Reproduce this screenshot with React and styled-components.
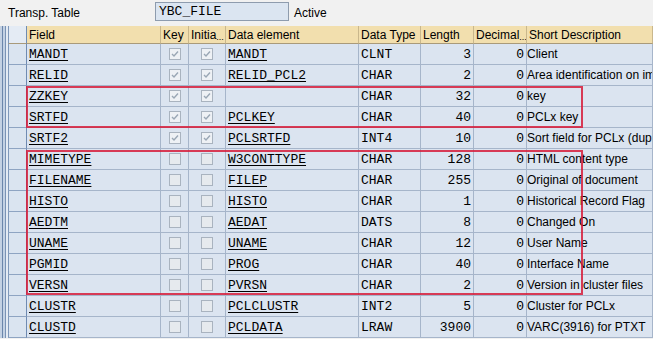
import React from 'react';
import styled, { createGlobalStyle } from 'styled-components';

const GlobalStyle = createGlobalStyle`
  html, body {
    margin: 0;
    padding: 0;
    background: #f1f1f1;
    overflow: hidden;
  }
  body {
    color: #000;
    font-family: "Liberation Sans", Arial, sans-serif;
    font-size: 12px;
  }
`;

// selector, field, key, initial, data element, type, length, decimals, description
const COLUMNS = '19px 134px 28px 37px 133px 62px 53px 53px 126px';

const FIELDS = [
  { name: 'MANDT', key: true, initial: true, element: 'MANDT', type: 'CLNT', length: 3, text: 'Client' },
  { name: 'RELID', key: true, initial: true, element: 'RELID_PCL2', type: 'CHAR', length: 2, text: 'Area identification on import/export' },
  { name: 'ZZKEY', key: true, initial: true, element: '', type: 'CHAR', length: 32, text: 'key' },
  { name: 'SRTFD', key: true, initial: true, element: 'PCLKEY', type: 'CHAR', length: 40, text: 'PCLx key' },
  { name: 'SRTF2', key: true, initial: true, element: 'PCLSRTFD', type: 'INT4', length: 10, text: 'Sort field for PCLx (duplicate key)' },
  { name: 'MIMETYPE', element: 'W3CONTTYPE', type: 'CHAR', length: 128, text: 'HTML content type' },
  { name: 'FILENAME', element: 'FILEP', type: 'CHAR', length: 255, text: 'Original of document' },
  { name: 'HISTO', element: 'HISTO', type: 'CHAR', length: 1, text: 'Historical Record Flag' },
  { name: 'AEDTM', element: 'AEDAT', type: 'DATS', length: 8, text: 'Changed On' },
  { name: 'UNAME', element: 'UNAME', type: 'CHAR', length: 12, text: 'User Name' },
  { name: 'PGMID', element: 'PROG', type: 'CHAR', length: 40, text: 'Interface Name' },
  { name: 'VERSN', element: 'PVRSN', type: 'CHAR', length: 2, text: 'Version in cluster files' },
  { name: 'CLUSTR', element: 'PCLCLUSTR', type: 'INT2', length: 5, text: 'Cluster for PCLx' },
  { name: 'CLUSTD', element: 'PCLDATA', type: 'LRAW', length: 3900, text: 'VARC(3916) for PTXT' },
];

const Screen = styled.div`
  width: 653px;
  height: 339px;
  overflow: hidden;
  background: #f1f1f1;
`;

const TopBar = styled.div`
  display: flex;
  align-items: center;
  height: 26px;
  padding-left: 8px;
  box-sizing: border-box;
`;

const TopLabel = styled.span`
  width: 147px;
  font-size: 12px;
`;

const NameBox = styled.div`
  display: flex;
  align-items: center;
  box-sizing: border-box;
  width: 134px;
  height: 19px;
  padding-left: 3px;
  margin-bottom: 3px;
  border: 1px solid #8e9cae;
  background: #dbe5f1;
  font-family: "Liberation Mono", "Courier New", monospace;
  font-size: 13px;
`;

const Status = styled.span`
  margin-left: 5px;
  font-size: 12px;
`;

const TableArea = styled.div`
  position: relative;
  display: flex;
`;

const SideStrip = styled.div`
  width: 8px;
  flex-shrink: 0;
  background: linear-gradient(
    to right,
    #c3d1e3 0 2px,
    #6b86ab 2px 3px,
    #c3d1e3 3px 5px,
    #7a93b5 5px 6px,
    #e4ebf4 6px 8px
  );
`;

const Grid = styled.div`
  display: flex;
  flex-direction: column;
`;

const Row = styled.div`
  display: grid;
  grid-template-columns: ${COLUMNS};
  height: ${({ $header }) => ($header ? '18px' : '21px')};
`;

const HeadCell = styled.div`
  display: flex;
  align-items: center;
  box-sizing: border-box;
  padding-left: 2px;
  overflow: hidden;
  white-space: nowrap;
  background: #f2dfae;
  border-right: 1px solid #c9b78c;
  border-bottom: 1px solid #a99a7a;
  font-size: 12px;
`;

const Dots = styled.span`
  font-size: 9px;
  align-self: flex-end;
  margin-bottom: 1px;
`;

const Selector = styled.div`
  box-sizing: border-box;
  background: ${({ $header }) => ($header ? '#e4ebf4' : '#dae4f0')};
  border-left: 1px solid #7f98ba;
  border-right: 1px solid #6f8bb2;
  border-bottom: 1px solid ${({ $header }) => ($header ? '#a99a7a' : '#8ea4c2')};
`;

const Cell = styled.div`
  display: flex;
  align-items: center;
  justify-content: ${({ $align }) => $align || 'flex-start'};
  box-sizing: border-box;
  padding: 0 2px;
  overflow: hidden;
  white-space: nowrap;
  background: #dbe4f0;
  border-right: 1px solid #a6b5ca;
  border-bottom: 1px solid #a6b5ca;
`;

const Mono = styled.span`
  font-family: "Liberation Mono", "Courier New", monospace;
  font-size: 13px;
  text-decoration: ${({ $link }) => ($link ? 'underline' : 'none')};
  text-underline-offset: 2px;
`;

const Text = styled.span`
  font-size: 12px;
  margin-left: -2px;
`;

const Box = styled.span`
  display: flex;
  align-items: center;
  justify-content: center;
  box-sizing: border-box;
  width: 12px;
  height: 12px;
  border: 1px solid #a9b3bf;
  background: ${({ $checked }) => ($checked ? '#eef1f5' : '#e6eaee')};
`;

const Highlight = styled.div`
  position: absolute;
  left: 26px;
  top: ${({ $top }) => $top}px;
  width: 557px;
  height: ${({ $height }) => $height}px;
  box-sizing: border-box;
  border: 2px solid rgba(214, 28, 58, 0.85);
  pointer-events: none;
`;

const Checkbox = ({ checked }) => (
  <Box $checked={checked}>
    {checked && (
      <svg width="8" height="8" viewBox="0 0 8 8">
        <path d="M1 4 L3 6 L7 1.5" fill="none" stroke="#9aa7b5" strokeWidth="1.4" />
      </svg>
    )}
  </Box>
);

const FieldRow = ({ field }) => (
  <Row>
    <Selector />
    <Cell>
      <Mono $link>{field.name}</Mono>
    </Cell>
    <Cell $align="center">
      <Checkbox checked={field.key} />
    </Cell>
    <Cell $align="center">
      <Checkbox checked={field.initial} />
    </Cell>
    <Cell>
      <Mono $link>{field.element}</Mono>
    </Cell>
    <Cell>
      <Mono>{field.type}</Mono>
    </Cell>
    <Cell $align="flex-end">
      <Mono>{field.length}</Mono>
    </Cell>
    <Cell $align="flex-end">
      <Mono>0</Mono>
    </Cell>
    <Cell>
      <Text>{field.text}</Text>
    </Cell>
  </Row>
);

const App = () => (
  <Screen>
    <GlobalStyle />
    <TopBar>
      <TopLabel>Transp. Table</TopLabel>
      <NameBox>YBC_FILE</NameBox>
      <Status>Active</Status>
    </TopBar>
    <TableArea>
      <SideStrip />
      <Grid>
        <Row $header>
          <Selector $header />
          <HeadCell>Field</HeadCell>
          <HeadCell>Key</HeadCell>
          <HeadCell>
            Initia<Dots>...</Dots>
          </HeadCell>
          <HeadCell>Data element</HeadCell>
          <HeadCell>Data Type</HeadCell>
          <HeadCell>Length</HeadCell>
          <HeadCell>
            Decimal<Dots>...</Dots>
          </HeadCell>
          <HeadCell>Short Description</HeadCell>
        </Row>
        {FIELDS.map((field) => (
          <FieldRow key={field.name} field={field} />
        ))}
      </Grid>
      <Highlight $top={60} $height={42} />
      <Highlight $top={124} $height={145} />
    </TableArea>
  </Screen>
);

export default App;
